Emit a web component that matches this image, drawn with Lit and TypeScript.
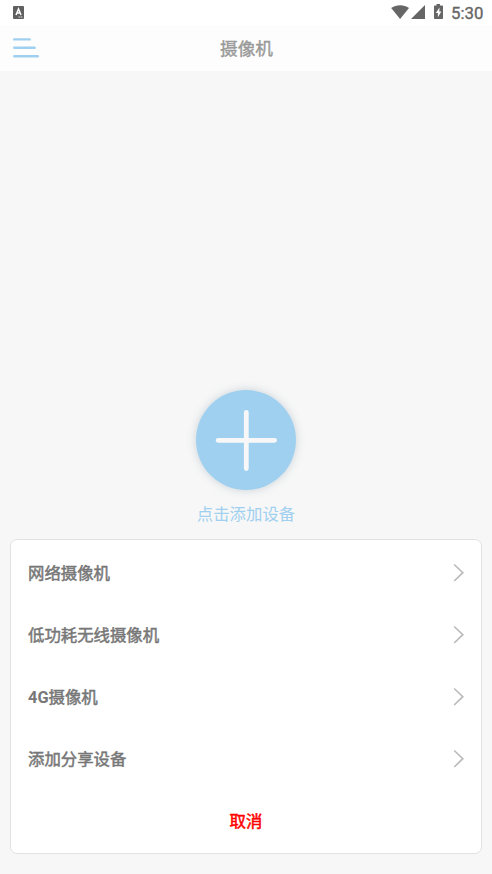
import { LitElement, html, css } from "lit";
import { customElement } from "lit/decorators.js";

@customElement("app-root")
export class AppRoot extends LitElement {
  static styles = css`
    :host {
      display: flex;
      flex-direction: column;
      height: 874px;
      background: #f7f7f7;
      font-family: Roboto, "Noto Sans CJK SC", sans-serif;
      overflow: hidden;
    }
    svg {
      display: block;
    }
    .status {
      height: 25px;
      flex: none;
      box-sizing: border-box;
      background: #fff;
      display: flex;
      justify-content: space-between;
      padding: 0 8px 0 13px;
      color: #666;
    }
    .right {
      display: flex;
    }
    .clock {
      font-size: 16.8px;
      -webkit-text-stroke: 0.35px #666;
      line-height: 27px;
      width: 33px;
      margin-left: 6px;
      white-space: nowrap;
    }
    .bar {
      height: 46px;
      flex: none;
      background: #fdfdfd;
      display: grid;
      grid-template-columns: 52px 1fr 52px;
      align-items: center;
    }
    .menu {
      padding-left: 12px;
    }
    .title {
      text-align: center;
      font-size: 17.6px;
      line-height: 26px;
      padding: 2px 0 0 1px;
      color: #999;
      -webkit-text-stroke: 0.4px #999;
    }
    .main {
      flex: 1;
      display: flex;
      flex-direction: column;
      align-items: center;
      padding-top: 319px;
    }
    .add {
      width: 100px;
      height: 100px;
      margin-right: 1px;
      border-radius: 50%;
      background: #a0d0f0;
      box-shadow: 0 0 10px rgba(90, 120, 140, 0.28);
    }
    .hint {
      margin-top: 13px;
      font-size: 16.4px;
      line-height: 24px;
      color: #a0d0f0;
    }
    .sheet {
      flex: none;
      box-sizing: border-box;
      height: 315px;
      margin: 0 10px 20px;
      border: 1px solid #e2e2e2;
      border-radius: 7px;
      background: #fff;
      padding-top: 2px;
    }
    .row {
      height: 62px;
      display: flex;
      align-items: center;
      justify-content: space-between;
      padding: 0 16px 0 17px;
      font-size: 16.4px;
      color: #777;
    }
    .label {
      padding-bottom: 2px;
      -webkit-text-stroke: 0.5px #777;
    }
    .latin {
      font-weight: 700;
      -webkit-text-stroke: 0;
    }
    .cancel {
      height: 60px;
      display: flex;
      align-items: center;
      justify-content: center;
      font-size: 16.4px;
      color: #f00;
      -webkit-text-stroke: 0.5px #f00;
    }
  `;

  private row(latin: string, text: string) {
    return html`<div class="row">
      <span class="label"><span class="latin">${latin}</span>${text}</span>
      <svg width="12" height="20" viewBox="0 0 12 20" fill="none" stroke="#bbb" stroke-width="1.7">
        <path d="M1.2 1.500 9.800 9.700 1.200 18" />
      </svg>
    </div>`;
  }

  render() {
    return html`
      <div class="status">
        <svg width="12" height="25" viewBox="0 0 12 25">
          <rect y="6" width="11" height="13" rx="1" fill="#606060" />
          <path d="M3 15 5.500 9 8 15M4 13H7" fill="none" stroke="#fff" stroke-width="1.500" />
          <path d="M5.500 17H10" stroke="#aaa" stroke-width="1.500" stroke-dasharray="1.500 .5" />
        </svg>
        <div class="right">
          <svg width="54" height="25" viewBox="0 0 54 25" fill="#666">
            <path d="M.2 8.100C5.500 4.300 12.700 4.300 18 8.100L9.100 19Z" />
            <path d="M34 5V19H20Z" />
            <path d="M45.500 4h3.500v1.500h2.200q.8 0 .8.800V18q0 1-.8 1h-7.400q-.8 0-.8-1V6.300q0-.8.8-.8h1.700z" />
            <path d="M48.500 7.500 44.800 13h2.100v4.300L50.300 11.500h-2z" fill="#fff" />
          </svg>
          <span class="clock">5:30</span>
        </div>
      </div>
      <div class="bar">
        <div class="menu">
          <svg width="28" height="22" viewBox="0 0 28 22" stroke="#a0d0f0" stroke-width="2.400" stroke-linecap="round">
            <path d="M2.200 2.400H17.700M2.200 10.700H22.700M2.200 19.200H25.900" />
          </svg>
        </div>
        <div class="title">摄像机</div>
      </div>
      <div class="main">
        <svg class="add" viewBox="0 0 100 100" fill="none" stroke="#f7f7f7" stroke-width="4.800" stroke-linecap="round">
          <path d="M50.300 22.300V78.600M22.100 50.300H78.600" />
        </svg>
        <div class="hint">点击添加设备</div>
      </div>
      <div class="sheet">
        ${this.row("", "网络摄像机")}
        ${this.row("", "低功耗无线摄像机")}
        ${this.row("4G", "摄像机")}
        ${this.row("", "添加分享设备")}
        <div class="cancel">取消</div>
      </div>
    `;
  }
}
